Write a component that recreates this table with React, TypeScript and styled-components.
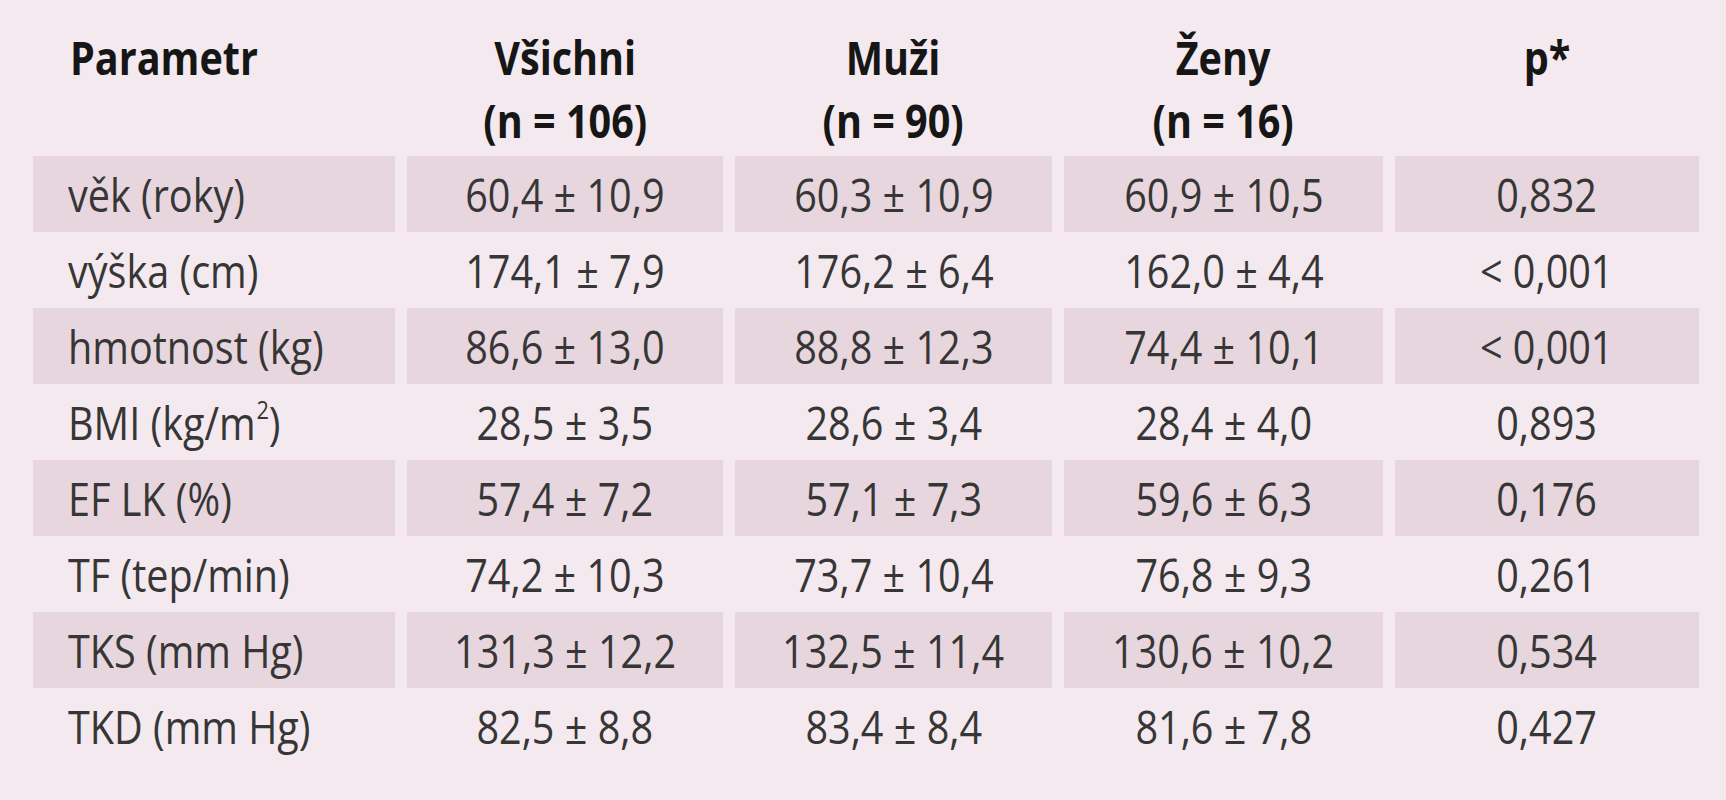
import React from 'react';
import styled, { createGlobalStyle } from 'styled-components';

const GlobalStyle = createGlobalStyle`
  html, body {
    margin: 0;
    padding: 0;
    background: #f4e9ee;
  }
`;

const Page = styled.div`
  width: 1726px;
  min-height: 800px;
  box-sizing: border-box;
  padding-left: 33px;
  background: #f4e9ee;
  font-family: 'Open Sans', 'Noto Sans', sans-serif;
  font-size: 46px;
  color: #363636;
`;

const Table = styled.div`
  display: grid;
  grid-template-columns: 362px 316px 317px 319px 304px;
  column-gap: 12px;
`;

const HeadCell = styled.div<{ $left?: boolean }>`
  padding: 26px 0 4px;
  padding-left: ${(p) => (p.$left ? '37px' : '0')};
  text-align: ${(p) => (p.$left ? 'left' : 'center')};
  font-weight: 700;
  line-height: 63px;
  color: #161616;
`;

const Cell = styled.div<{ $left?: boolean; $shaded?: boolean }>`
  height: 76px;
  display: flex;
  align-items: center;
  justify-content: ${(p) => (p.$left ? 'flex-start' : 'center')};
  padding-left: ${(p) => (p.$left ? '35px' : '0')};
  background: ${(p) => (p.$shaded ? '#e8d6de' : 'transparent')};
  line-height: 76px;
  white-space: nowrap;
`;

const Narrow = styled.span<{ $left?: boolean }>`
  display: inline-block;
  transform: scaleX(0.86);
  transform-origin: ${(p) => (p.$left ? 'left' : 'center')} center;
  white-space: nowrap;
`;

const Sup = styled.sup`
  font-size: 0.55em;
  line-height: 0;
  vertical-align: 0.85em;
  margin-left: 1px;
`;

type Row = { label: React.ReactNode; values: string[] };

const rows: Row[] = [
  { label: 'věk (roky)', values: ['60,4 ± 10,9', '60,3 ± 10,9', '60,9 ± 10,5', '0,832'] },
  { label: 'výška (cm)', values: ['174,1 ± 7,9', '176,2 ± 6,4', '162,0 ± 4,4', '< 0,001'] },
  { label: 'hmotnost (kg)', values: ['86,6 ± 13,0', '88,8 ± 12,3', '74,4 ± 10,1', '< 0,001'] },
  {
    label: (
      <>
        BMI (kg/m<Sup>2</Sup>)
      </>
    ),
    values: ['28,5 ± 3,5', '28,6 ± 3,4', '28,4 ± 4,0', '0,893'],
  },
  { label: 'EF LK (%)', values: ['57,4 ± 7,2', '57,1 ± 7,3', '59,6 ± 6,3', '0,176'] },
  { label: 'TF (tep/min)', values: ['74,2 ± 10,3', '73,7 ± 10,4', '76,8 ± 9,3', '0,261'] },
  { label: 'TKS (mm Hg)', values: ['131,3 ± 12,2', '132,5 ± 11,4', '130,6 ± 10,2', '0,534'] },
  { label: 'TKD (mm Hg)', values: ['82,5 ± 8,8', '83,4 ± 8,4', '81,6 ± 7,8', '0,427'] },
];

const headers: React.ReactNode[] = [
  <>Všichni<br />(n = 106)</>,
  <>Muži<br />(n = 90)</>,
  <>Ženy<br />(n = 16)</>,
  <>p*</>,
];

export default function App() {
  return (
    <>
      <GlobalStyle />
      <Page>
        <Table>
          <HeadCell $left>
            <Narrow $left>Parametr</Narrow>
          </HeadCell>
          {headers.map((h, i) => (
            <HeadCell key={i}>
              <Narrow>{h}</Narrow>
            </HeadCell>
          ))}
          {rows.map((r, i) => (
            <React.Fragment key={i}>
              <Cell $left $shaded={i % 2 === 0}>
                <Narrow $left>{r.label}</Narrow>
              </Cell>
              {r.values.map((v, j) => (
                <Cell key={j} $shaded={i % 2 === 0}>
                  <Narrow>{v}</Narrow>
                </Cell>
              ))}
            </React.Fragment>
          ))}
        </Table>
      </Page>
    </>
  );
}
